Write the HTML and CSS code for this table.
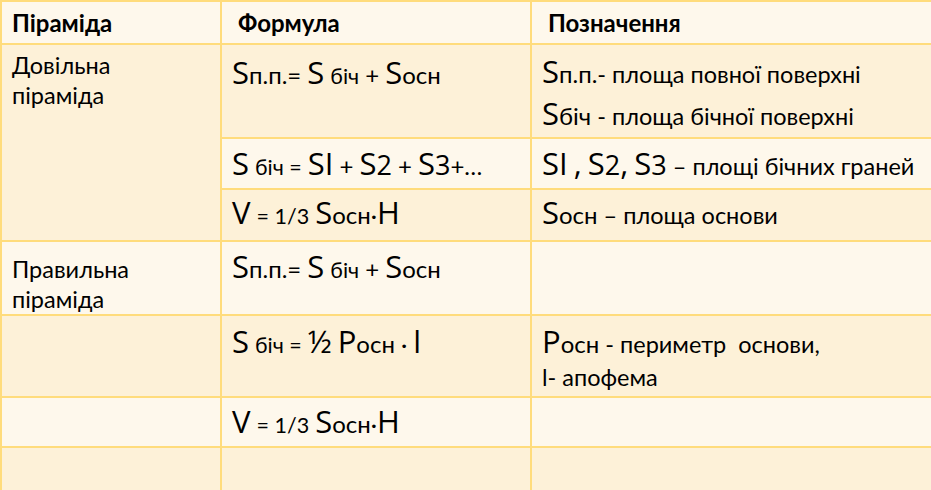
FILE: index.html
```html
<!DOCTYPE html>
<html lang="uk">
<head>
<meta charset="utf-8">
<link rel="stylesheet" href="styles.css">
</head>
<body>
<table class="grid">
  <colgroup>
    <col class="c1"><col class="c2"><col class="c3">
  </colgroup>
  <tr class="head light">
    <th>Піраміда</th>
    <th class="hpad">Формула</th>
    <th class="hpad">Позначення</th>
  </tr>
  <tr class="r1 dark">
    <td rowspan="3" class="name">Довільна<br>піраміда</td>
    <td class="f"><span class="S">S</span><span class="m">п.п.=</span> <span class="S">S</span> <span class="s">біч</span> <span class="m">+</span> <span class="S">S</span><span class="m">осн</span></td>
    <td class="d"><div class="dl"><span class="S">S</span><span class="m2">п.п.</span>- площа повної поверхні</div><div class="dl"><span class="S">S</span><span class="m2">біч</span> - площа бічної поверхні</div></td>
  </tr>
  <tr class="r2 light">
    <td class="f"><span class="S">S</span> <span class="s">біч =</span> <span class="S">S</span><span class="S">I</span> <span class="m">+</span> <span class="S">S</span><span class="dg">2</span> <span class="m">+</span> <span class="S">S</span><span class="dg">3</span><span class="m">+…</span></td>
    <td class="d"><span class="S">S</span><span class="S">I</span> <span class="S">,</span> <span class="S">S</span><span class="dg">2</span><span class="S">,</span> <span class="S">S</span><span class="dg">3</span> – площі бічних граней</td>
  </tr>
  <tr class="r3 dark">
    <td class="f"><span class="S">V</span> <span class="s">= 1/3</span> <span class="S">S</span><span class="m">осн</span><span class="m">·</span><span class="S">H</span></td>
    <td class="d"><span class="S">S</span><span class="m2">осн</span> – площа основи</td>
  </tr>
  <tr class="r4 light">
    <td class="name">Правильна<br>піраміда</td>
    <td class="f"><span class="S">S</span><span class="m">п.п.=</span> <span class="S">S</span> <span class="s">біч</span> <span class="m">+</span> <span class="S">S</span><span class="m">осн</span></td>
    <td></td>
  </tr>
  <tr class="r5 dark">
    <td></td>
    <td class="f"><span class="S">S</span> <span class="s">біч =</span> <span class="S">½</span> <span class="S">P</span><span class="m">осн</span> <span class="m">·</span> <span class="S">l</span></td>
    <td class="d"><div class="dl2"><span class="S">P</span><span class="m2">осн</span> - периметр&nbsp; основи,</div><div class="dl2">l- апофема</div></td>
  </tr>
  <tr class="r6 light">
    <td></td>
    <td class="f"><span class="S">V</span> <span class="s">= 1/3</span> <span class="S">S</span><span class="m">осн</span><span class="m">·</span><span class="S">H</span></td>
    <td></td>
  </tr>
  <tr class="r7 dark">
    <td></td>
    <td></td>
    <td></td>
  </tr>
</table>
</body>
</html>
```

FILE: styles.css
```css
html, body {
  margin: 0;
  padding: 0;
  background: #ffffff;
}
body {
  font-family: "Lato", "Open Sans", sans-serif;
  color: #000000;
  overflow: hidden;
}
.grid {
  border-collapse: collapse;
  width: 931px;
  table-layout: fixed;
}
.c1 { width: 220px; }
.c2 { width: 310px; }
.c3 { width: 401px; }
.grid th, .grid td {
  border: 2px solid #ffdc7c;
  padding: 0 0 0 10px;
  text-align: left;
  vertical-align: top;
  font-size: 23.5px;
  line-height: 30px;
  white-space: nowrap;
}
.light th, .light td { background: #fef8ec; }
.dark td { background: #fdf1d8; }
.head { height: 43px; }
.head th {
  vertical-align: middle;
  font-weight: 700;
  font-size: 24px;
}
.head th.hpad { padding-left: 16px; }
.r1 { height: 94px; }
.r2 { height: 51px; }
.r3 { height: 52px; }
.r4 { height: 72px; }
.r5 { height: 82px; }
.r6 { height: 50px; }
.r7 { height: 50px; }
.grid td.name { padding-top: 5px; }
.grid .r4 td.name { padding-top: 12px; }
.grid td.f, .grid td.d { line-height: 36px; }
.grid .r1 td.f { padding-top: 12px; }
.grid .r1 td.d { padding-top: 8px; }
.grid .r2 td.f, .grid .r2 td.d { padding-top: 8px; }
.grid .r3 td.f, .grid .r3 td.d { padding-top: 7px; }
.grid .r4 td.f { padding-top: 9px; }
.grid .r5 td.f { padding-top: 10px; }
.grid .r5 td.d { padding-top: 10px; }
.grid .r6 td.f { padding-top: 8px; }
.S {
  font-family: "Open Sans", sans-serif;
  font-size: 31px;
  line-height: 30px;
}
.m, .m2 {
  font-size: 24px;
}
.s {
  font-size: 21.5px;
}
.dg {
  font-family: "Open Sans", sans-serif;
  font-size: 27px;
}
.dl { height: 42px; line-height: 42px; }
.dl2 { height: 34px; line-height: 34px; }
```
